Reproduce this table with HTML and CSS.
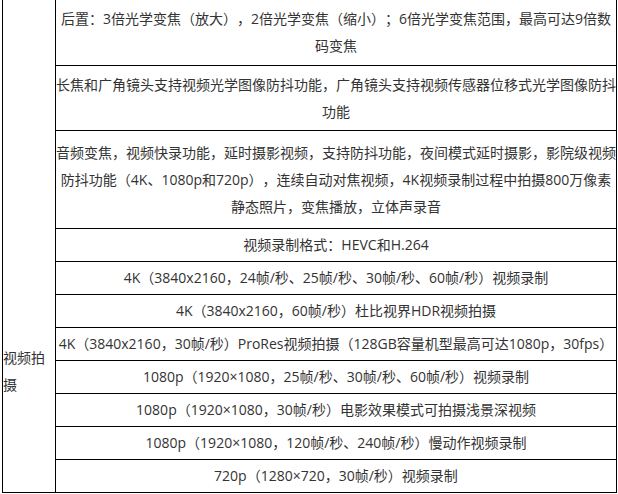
FILE: index.html
```html
<!DOCTYPE html>
<html lang="zh-CN">
<head>
<meta charset="utf-8">
<title>视频拍摄</title>
<link rel="stylesheet" href="styles.css">
</head>
<body>
<table class="spec">
  <colgroup>
    <col class="col-label">
    <col class="col-value">
  </colgroup>
  <tbody>
    <tr class="r2">
      <td class="label" rowspan="11">视频拍摄</td>
      <td>后置：3倍光学变焦（放大），2倍光学变焦（缩小）；6倍光学变焦范围，最高可达9倍数码变焦</td>
    </tr>
    <tr class="r2">
      <td>长焦和广角镜头支持视频光学图像防抖功能，广角镜头支持视频传感器位移式光学图像防抖功能</td>
    </tr>
    <tr class="r3">
      <td>音频变焦，视频快录功能，延时摄影视频，支持防抖功能，夜间模式延时摄影，影院级视频防抖功能（4K、1080p和720p），连续自动对焦视频，4K视频录制过程中拍摄800万像素静态照片，变焦播放，立体声录音</td>
    </tr>
    <tr class="r1"><td>视频录制格式：HEVC和H.264</td></tr>
    <tr class="r1"><td>4K（3840x2160，24帧/秒、25帧/秒、30帧/秒、60帧/秒）视频录制</td></tr>
    <tr class="r1"><td>4K（3840x2160，60帧/秒）杜比视界HDR视频拍摄</td></tr>
    <tr class="r1"><td>4K（3840x2160，30帧/秒）ProRes视频拍摄（128GB容量机型最高可达1080p，30fps）</td></tr>
    <tr class="r1"><td>1080p（1920×1080，25帧/秒、30帧/秒、60帧/秒）视频录制</td></tr>
    <tr class="r1"><td>1080p（1920×1080，30帧/秒）电影效果模式可拍摄浅景深视频</td></tr>
    <tr class="r1"><td>1080p（1920×1080，120帧/秒、240帧/秒）慢动作视频录制</td></tr>
    <tr class="r1"><td>720p（1280×720，30帧/秒）视频录制</td></tr>
  </tbody>
</table>
</body>
</html>
```

FILE: styles.css
```css
html, body {
  margin: 0;
  padding: 0;
  background: #fff;
}

body {
  font-family: "Open Sans", "Noto Sans CJK SC", "Noto Sans", sans-serif;
  font-size: 14px;
  color: #333;
  text-spacing-trim: space-all;
}

.spec {
  border-collapse: collapse;
  table-layout: fixed;
  width: 615px;
  margin-left: 2px;
}

.col-label {
  width: 53px;
}

.spec td {
  border: 1px solid #000;
  padding: 0;
  line-height: 27px;
  text-align: center;
  vertical-align: middle;
}

.spec tr:first-child td {
  border-top: 0;
}

.spec td.label {
  text-align: left;
  vertical-align: top;
  padding: 344px 8px 0 0;
}

.r1 {
  height: 33px;
}

.r2 {
  height: 65px;
}

.r3 {
  height: 98px;
}
```
